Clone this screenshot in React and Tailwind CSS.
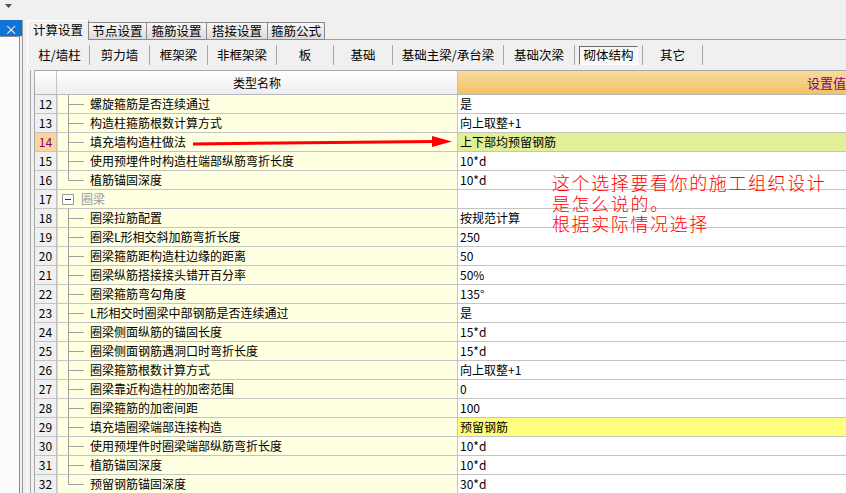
import React from 'react';

const rows = [
  { n: 12, name: '螺旋箍筋是否连续通过', value: '是', tree: 'mid' },
  { n: 13, name: '构造柱箍筋根数计算方式', value: '向上取整+1', tree: 'mid' },
  { n: 14, name: '填充墙构造柱做法', value: '上下部均预留钢筋', tree: 'mid', active: true, bg: 'bg-[#e1ef96]' },
  { n: 15, name: '使用预埋件时构造柱端部纵筋弯折长度', value: '10*d', tree: 'mid' },
  { n: 16, name: '植筋锚固深度', value: '10*d', tree: 'last' },
  { n: 17, name: '圈梁', value: '', tree: 'group' },
  { n: 18, name: '圈梁拉筋配置', value: '按规范计算', tree: 'mid' },
  { n: 19, name: '圈梁L形相交斜加筋弯折长度', value: '250', tree: 'mid' },
  { n: 20, name: '圈梁箍筋距构造柱边缘的距离', value: '50', tree: 'mid' },
  { n: 21, name: '圈梁纵筋搭接接头错开百分率', value: '50%', tree: 'mid' },
  { n: 22, name: '圈梁箍筋弯勾角度', value: '135°', tree: 'mid' },
  { n: 23, name: 'L形相交时圈梁中部钢筋是否连续通过', value: '是', tree: 'mid' },
  { n: 24, name: '圈梁侧面纵筋的锚固长度', value: '15*d', tree: 'mid' },
  { n: 25, name: '圈梁侧面钢筋遇洞口时弯折长度', value: '15*d', tree: 'mid' },
  { n: 26, name: '圈梁箍筋根数计算方式', value: '向上取整+1', tree: 'mid' },
  { n: 27, name: '圈梁靠近构造柱的加密范围', value: '0', tree: 'mid' },
  { n: 28, name: '圈梁箍筋的加密间距', value: '100', tree: 'mid' },
  { n: 29, name: '填充墙圈梁端部连接构造', value: '预留钢筋', tree: 'mid', bg: 'bg-[#ffff80]' },
  { n: 30, name: '使用预埋件时圈梁端部纵筋弯折长度', value: '10*d', tree: 'mid' },
  { n: 31, name: '植筋锚固深度', value: '10*d', tree: 'mid' },
  { n: 32, name: '预留钢筋锚固深度', value: '30*d', tree: 'last' },
];

const tabs = [
  { label: '节点设置', w: 'w-[58px]' },
  { label: '箍筋设置', w: 'w-[60px]' },
  { label: '搭接设置', w: 'w-[61px]' },
  { label: '箍筋公式', w: 'w-[57px]' },
];

const subTabs = [
  { label: '柱/墙柱', w: 'w-[60px]' },
  { label: '剪力墙', w: 'w-[60px]' },
  { label: '框架梁', w: 'w-[58px]' },
  { label: '非框架梁', w: 'w-[69px]' },
  { label: '板', w: 'w-[57px]' },
  { label: '基础', w: 'w-[59px]' },
  { label: '基础主梁/承台梁', w: 'w-[111px]' },
  { label: '基础次梁', w: 'w-[71px]' },
  { label: '砌体结构', w: 'w-[68px]', pressed: true },
  { label: '其它', w: 'w-[60px]' },
];

function Tree({ kind }) {
  if (kind === 'group') {
    return (
      <svg width="20" height="18" className="shrink-0">
        <rect x="3.5" y="4.5" width="11" height="10" fill="#fff" stroke="#9a9a9a" />
        <line x1="6" y1="9.5" x2="12" y2="9.5" stroke="#303030" />
      </svg>
    );
  }
  return (
    <svg width="30" height="18" className="shrink-0">
      <line x1="9.5" y1="0" x2="9.5" y2={kind === 'last' ? 9.5 : 18} stroke="#a0a0a0" />
      <line x1="9.5" y1="9.5" x2="25" y2="9.5" stroke="#a0a0a0" />
    </svg>
  );
}

function Row({ r }) {
  return (
    <div className="flex h-[19px] border-b border-[#c4c4c4]">
      <div
        className={`w-[22px] shrink-0 border-r border-[#c4c4c4] flex items-center justify-center ${
          r.active ? 'bg-[#fdd596] text-[#800080]' : 'bg-[#f0f0f0] text-black'
        }`}
      >
        {r.n}
      </div>
      <div className="w-[401px] shrink-0 border-r border-[#c4c4c4] bg-[#ffffe1] flex items-center pl-[1px] border-l border-l-[#d8d8c0]">
        <Tree kind={r.tree} />
        <span className={r.tree === 'group' ? 'text-[#9a9a9a] ml-[2px]' : 'ml-[1px]'}>{r.name}</span>
      </div>
      <div className={`flex-1 flex items-center pl-[2px] ${r.bg || 'bg-white'}`}>{r.value}</div>
    </div>
  );
}

export default function App() {
  return (
    <div
      className="relative w-[846px] h-[493px] overflow-hidden bg-[#f0f0f0] text-[12px] leading-none text-black"
      style={{ fontFamily: '"Noto Sans CJK SC", "Noto Sans", sans-serif' }}
    >
      {/* top strip */}
      <div className="h-[20px] flex items-start pl-[5px] pt-[4px]">
        <svg width="7" height="4">
          <polygon points="0,0 7,0 3.5,4" fill="#505050" />
        </svg>
      </div>

      <div className="flex h-[473px]">
        {/* left docked panel */}
        <div className="w-[23px] shrink-0 flex flex-col border-r border-[#9a9a9a]">
          <div className="h-[16px] w-[22px] bg-[#0f74d6] text-white flex items-center justify-center text-[13px]">
            ×
          </div>
          <div className="flex-1 w-[20px] bg-[#fbfbfb] border-t border-r border-[#8c8c8c]" />
        </div>

        {/* main tab control */}
        <div className="flex-1 flex flex-col pl-[4px]">
          <div className="h-[20px] flex items-end">
            <div className="w-[62px] h-[20px] border-t border-l border-r border-t-white border-l-white border-r-[#8a8a8a] bg-[#f0f0f0] flex items-center justify-center text-[12.5px]">
              计算设置
            </div>
            {tabs.map((t) => (
              <div
                key={t.label}
                className={`${t.w} h-[18px] border border-[#8a8a8a] border-l-0 bg-gradient-to-b from-[#f6f6f6] to-[#dcdcdc] flex items-center justify-center text-[12.5px]`}
              >
                {t.label}
              </div>
            ))}
            <div className="flex-1 h-[1px] border-b border-[#a0a0a0]" />
          </div>

          <div className="flex-1 flex flex-col border-l border-white">
            {/* sub tabs */}
            <div className="h-[30px] flex items-center pl-[2px]">
              {subTabs.map((s) => (
                <div key={s.label} className={`${s.w} h-[20px] flex items-center border-r border-[#a8a8a8]`}>
                  {s.pressed ? (
                    <div className="mx-[4px] flex-1 h-[19px] border border-t-[#6a6a6a] border-l-[#6a6a6a] border-b-white border-r-white bg-[#f8f8f8] flex items-center justify-center text-[12.5px]">
                      {s.label}
                    </div>
                  ) : (
                    <div className="flex-1 text-center text-[12.5px]">{s.label}</div>
                  )}
                </div>
              ))}
            </div>

            {/* grid */}
            <div className="flex-1 ml-[2px] pl-[3px] border-l border-[#a8a8a8]">
              <div className="h-full border-l border-t border-[#a8a8a8] flex flex-col">
                <div className="flex h-[24px] border-b border-[#b8b8b8]">
                  <div className="w-[22px] shrink-0 border-r border-[#c4c4c4] bg-gradient-to-b from-white to-[#eeeeee]" />
                  <div className="w-[401px] shrink-0 border-r border-[#c4c4c4] bg-gradient-to-b from-white to-[#eeeeee] flex items-center justify-center">
                    类型名称
                  </div>
                  <div className="flex-1 bg-gradient-to-b from-[#fadb9e] to-[#f0c262] flex items-center justify-end text-[#800080] text-[13px]">
                    设置值
                  </div>
                </div>
                {rows.map((r) => (
                  <Row key={r.n} r={r} />
                ))}
              </div>
            </div>
          </div>
        </div>
      </div>

      {/* annotation overlay */}
      <svg className="absolute left-0 top-0 pointer-events-none" width="846" height="493">
        <line x1="193" y1="144" x2="436" y2="141.5" stroke="#ff0000" strokeWidth="3" />
        <polygon points="432,136 452,141.5 432,147" fill="#ff0000" />
      </svg>
      <div className="absolute left-[552px] top-[172px] text-[#ff0000] text-[18px] leading-[20.5px] tracking-[1.6px] font-light">
        <div>这个选择要看你的施工组织设计</div>
        <div>是怎么说的。</div>
        <div>根据实际情况选择</div>
      </div>
    </div>
  );
}
